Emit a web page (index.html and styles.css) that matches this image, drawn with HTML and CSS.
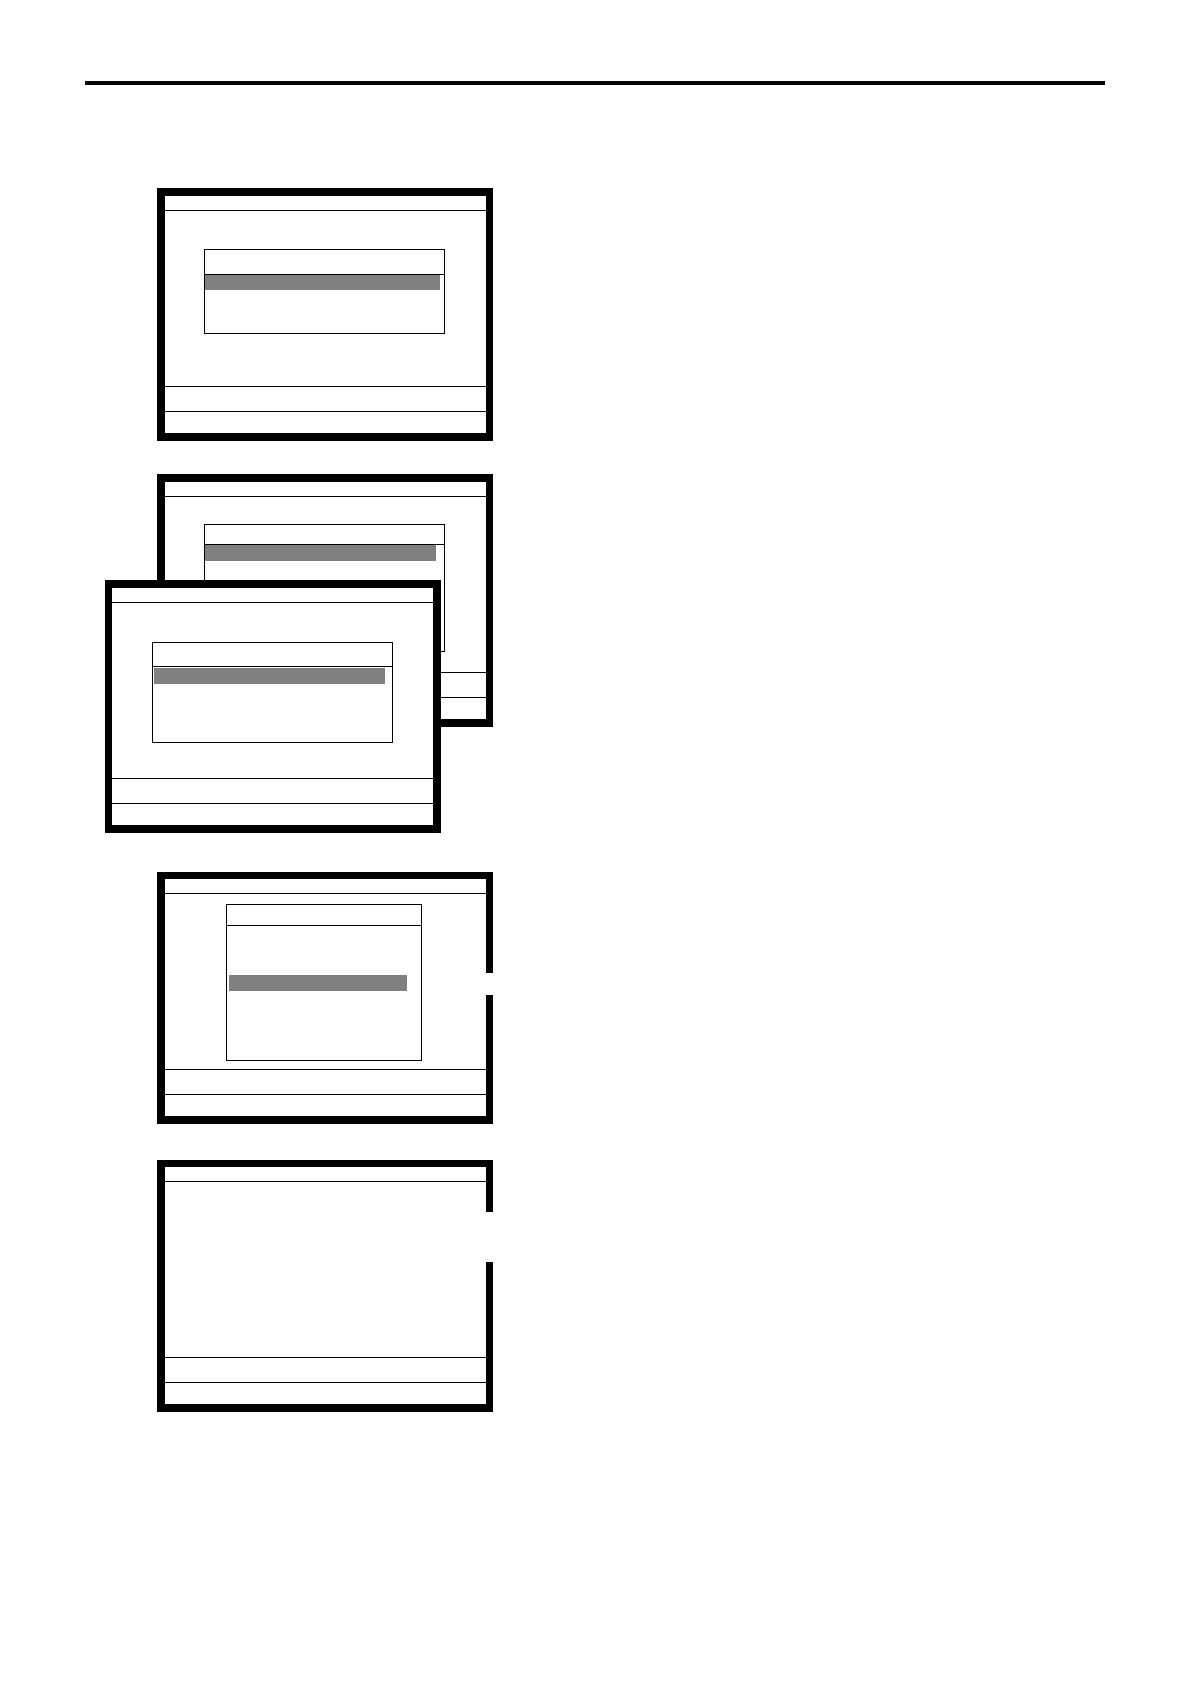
FILE: index.html
```html
<!DOCTYPE html>
<html lang="en">
<head>
  <meta charset="UTF-8">
  <meta name="viewport" content="width=device-width, initial-scale=1.0">
  <title>Menu Screens</title>
  <link rel="stylesheet" href="styles.css">
</head>
<body>
  <header class="page-header"></header>

  <main class="screens">
    <!-- Short menu -->
    <section class="screen">
      <div class="title-bar"></div>
      <div class="desktop">
        <div class="menu menu-short">
          <div class="menu-title"></div>
          <div class="menu-body"><div class="selected"></div></div>
        </div>
      </div>
      <div class="message-bar"></div>
      <div class="key-bar"></div>
    </section>

    <!-- Two screens, the second one in front -->
    <div class="stack">
      <section class="screen screen-back">
        <div class="title-bar"></div>
        <div class="desktop">
          <div class="menu menu-tall">
            <div class="menu-title"></div>
            <div class="menu-body"><div class="selected"></div></div>
          </div>
        </div>
        <div class="message-bar"></div>
        <div class="key-bar"></div>
      </section>
      <section class="screen screen-front">
        <div class="title-bar"></div>
        <div class="desktop">
          <div class="menu menu-medium">
            <div class="menu-title"></div>
            <div class="menu-body"><div class="selected"></div></div>
          </div>
        </div>
        <div class="message-bar"></div>
        <div class="key-bar"></div>
      </section>
    </div>

    <!-- Long menu -->
    <section class="screen screen-thin-top">
      <div class="title-bar"></div>
      <div class="desktop">
        <div class="menu menu-long">
          <div class="menu-title"></div>
          <div class="menu-body"><div class="selected"></div></div>
        </div>
      </div>
      <div class="message-bar"></div>
      <div class="key-bar"></div>
      <div class="notch notch-small"></div>
    </section>

    <!-- Empty screen -->
    <section class="screen screen-thin-top screen-last">
      <div class="title-bar"></div>
      <div class="desktop"></div>
      <div class="message-bar"></div>
      <div class="key-bar"></div>
      <div class="notch notch-large"></div>
    </section>
  </main>
</body>
</html>
```
FILE: styles.css
```css
* {
  box-sizing: border-box;
}

body {
  margin: 0;
  padding: 81px 85px;
  font-family: "Liberation Sans", Arial, sans-serif;
  background: #fff;
  color: #000;
}

.page-header {
  border-top: 4px solid #000;
}

.screens {
  margin-top: 103px;
  padding-left: 20px;
}

/* Screen frame */
.screen {
  position: relative;
  width: 100%;
  max-width: 336px;
  margin-left: 52px;
  border: 8px solid #000;
  border-right-width: 7px;
  background: #fff;
}

.screen-thin-top {
  border-top-width: 7px;
}

.screen-last {
  margin-top: 36px;
}

.title-bar {
  height: 15px;
  border-bottom: 1px solid #000;
}

.desktop {
  display: flex;
  align-items: flex-start;
  min-height: 175px;
}

.message-bar {
  height: 25px;
  border-top: 1px solid #000;
}

.key-bar {
  height: 22px;
  border-top: 1px solid #000;
}

/* Overlapping screens */
.stack {
  display: grid;
  margin: 33px 0 39px;
}

.screen-back,
.screen-front {
  grid-area: 1 / 1;
  align-self: start;
}

.screen-front {
  margin-top: 106px;
  margin-left: 0;
  border-left-width: 7px;
  border-right-width: 8px;
}

/* Menus */
.menu {
  width: 241px;
  border: 1px solid #000;
}

.menu-title {
  height: 25px;
  border-bottom: 1px solid #000;
}

.selected {
  width: 231px;
  height: 16px;
  background: #808080;
}

.menu-short {
  margin: 38px 0 0 39px;
}

.menu-short .menu-body {
  min-height: 58px;
}

.menu-short .selected {
  width: 235px;
  height: 15px;
}

.menu-tall {
  margin: 27px 0 0 39px;
}

.menu-tall .menu-title {
  height: 20px;
}

.menu-tall .menu-body {
  min-height: 106px;
}

.menu-medium {
  margin: 39px 0 0 40px;
}

.menu-medium .menu-title {
  height: 24px;
}

.menu-medium .menu-body {
  min-height: 75px;
  padding: 1px;
}

.menu-long {
  width: 196px;
  margin: 10px 0 0 61px;
}

.menu-long .menu-title {
  height: 21px;
}

.menu-long .menu-body {
  min-height: 134px;
  padding: 49px 2px 0;
}

.menu-long .selected {
  width: 178px;
}

/* Openings in the right edge of the frame */
.notch {
  position: absolute;
  right: -7px;
  width: 7px;
  background: #fff;
}

.notch-small {
  top: 94px;
  height: 22px;
}

.notch-large {
  top: 45px;
  height: 50px;
}
```
